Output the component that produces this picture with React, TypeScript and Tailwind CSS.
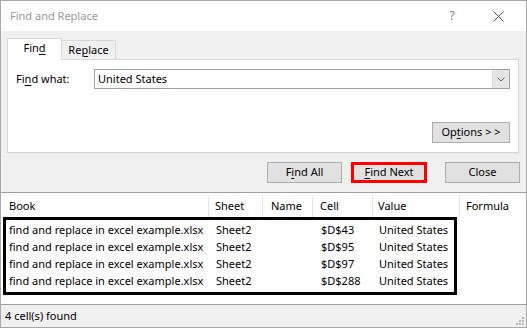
import React from 'react'

const font = { fontFamily: '"Noto Sans", "Open Sans", Arial, sans-serif' }

function U({ children }: { children: React.ReactNode }) {
  return <span className="underline underline-offset-[2px] decoration-1">{children}</span>
}

const rows = [
  { book: 'find and replace in excel example.xlsx', sheet: 'Sheet2', cell: '$D$43', value: 'United States' },
  { book: 'find and replace in excel example.xlsx', sheet: 'Sheet2', cell: '$D$95', value: 'United States' },
  { book: 'find and replace in excel example.xlsx', sheet: 'Sheet2', cell: '$D$97', value: 'United States' },
  { book: 'find and replace in excel example.xlsx', sheet: 'Sheet2', cell: '$D$288', value: 'United States' },
]

export default function App() {
  return (
    <div
      className="w-[527px] h-[328px] flex flex-col bg-[#f0f0f0] border border-[#a8a8a8] text-[11px] text-black overflow-hidden whitespace-nowrap"
      style={font}
    >
      {/* title bar */}
      <div className="h-[30px] shrink-0 bg-white flex items-center pl-[9px] pr-[22px]">
        <span className="text-[#999999] text-[11px]">Find and Replace</span>
        <span className="ml-auto text-[#8a8a8a] text-[13px] mr-[38px]">?</span>
        <svg width="11" height="11" viewBox="0 0 11 11" className="text-[#555]">
          <path d="M0.5 0.5 L10.5 10.5 M10.5 0.5 L0.5 10.5" stroke="currentColor" strokeWidth="1" />
        </svg>
      </div>

      {/* tabs */}
      <div className="px-[6px] pt-[7px]">
        <div className="flex items-end h-[21px]">
          <div className="w-[55px] h-[22px] -mb-px relative z-10 bg-white border border-b-0 border-[#d9d9d9] flex items-center justify-center pb-[2px]">
            Fin<U>d</U>
          </div>
          <div className="w-[54px] h-[19px] bg-[#f0f0f0] border border-l-0 border-b-0 border-[#d9d9d9] flex items-center justify-center">
            Re<U>p</U>lace
          </div>
        </div>
        <div className="h-[94px] w-[512px] bg-white border border-[#d9d9d9] flex flex-col pt-[9px] pl-[8px] pr-[8px]">
          <div className="flex items-center h-[20px]">
            <span className="w-[78px]">Fi<U>n</U>d what:</span>
            <div className="flex-1 h-[20px] border border-[#a0a0a0] flex items-center">
              <span className="pl-[3px] flex-1">United States</span>
              <div className="w-[17px] h-full bg-[#e5e5e5] border-l border-[#dadada] flex items-center justify-center">
                <svg width="8" height="5" viewBox="0 0 8 5">
                  <path d="M0.5 0.5 L4 4 L7.5 0.5" fill="none" stroke="#606060" strokeWidth="1" />
                </svg>
              </div>
            </div>
          </div>
          <div className="flex justify-end mt-[33px]">
            <button className="w-[78px] h-[21px] bg-[#e1e1e1] border border-[#adadad] flex items-center justify-center">
              Op<U>t</U>ions &gt; &gt;
            </button>
          </div>
        </div>
      </div>

      {/* action buttons */}
      <div className="flex justify-end pr-[6px] mt-[9px] h-[21px]">
        <button className="w-[75px] h-[21px] bg-[#e1e1e1] border border-[#adadad] flex items-center justify-center">
          F<U>i</U>nd All
        </button>
        <button className="w-[76px] h-[21px] ml-[9px] bg-[#e1e1e1] border-[3px] border-[#ff0000] flex items-center justify-center">
          <U>F</U>ind Next
        </button>
        <button className="w-[75px] h-[21px] ml-[18px] bg-[#e1e1e1] border border-[#adadad] flex items-center justify-center">
          Close
        </button>
      </div>

      {/* results list */}
      <div className="mt-[9px] h-[113px] bg-white border-t border-b border-[#a0a0a0] relative">
        <div className="flex h-[24px] items-center pt-[3px]">
          <div className="w-[208px] pl-[8px] border-r border-[#e5e5e5] h-full flex items-center">Book</div>
          <div className="w-[54px] pl-[6px] border-r border-[#e5e5e5] h-full flex items-center">Sheet</div>
          <div className="w-[50px] pl-[8px] border-r border-[#e5e5e5] h-full flex items-center">Name</div>
          <div className="w-[60px] pl-[7px] border-r border-[#e5e5e5] h-full flex items-center">Cell</div>
          <div className="w-[87px] pl-[5px] border-r border-[#e5e5e5] h-full flex items-center">Value</div>
          <div className="pl-[6px] h-full flex items-center">Formula</div>
        </div>
        <div className="flex flex-col pt-[5px]">
          {rows.map((r, i) => (
            <div key={i} className="flex h-[17px] items-center">
              <div className="w-[208px] pl-[8px]">{r.book}</div>
              <div className="w-[54px] pl-[7px]">{r.sheet}</div>
              <div className="w-[50px]"></div>
              <div className="w-[60px] pl-[8px]">{r.cell}</div>
              <div className="w-[87px] pl-[6px]">{r.value}</div>
            </div>
          ))}
        </div>
        {/* annotation box */}
        <div className="absolute left-[2px] top-[24px] w-[454px] h-[78px] border-[3px] border-black pointer-events-none" />
      </div>

      {/* status bar */}
      <div className="flex-1 flex items-center pl-[4px] relative">
        <span>4 cell(s) found</span>
        <svg width="9" height="9" viewBox="0 0 9 9" className="absolute right-[1px] bottom-[1px]">
          <rect x="6" y="0" width="2" height="2" fill="#b8b8b8" />
          <rect x="3" y="3" width="2" height="2" fill="#b8b8b8" />
          <rect x="6" y="3" width="2" height="2" fill="#b8b8b8" />
          <rect x="0" y="6" width="2" height="2" fill="#b8b8b8" />
          <rect x="3" y="6" width="2" height="2" fill="#b8b8b8" />
          <rect x="6" y="6" width="2" height="2" fill="#b8b8b8" />
        </svg>
      </div>
    </div>
  )
}
